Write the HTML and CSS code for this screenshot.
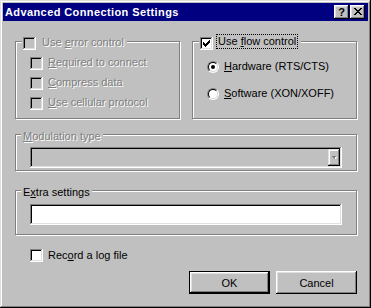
FILE: index.html
```html
<!DOCTYPE html>
<html lang="en">
<head>
    <meta charset="UTF-8">
    <title>Advanced Connection Settings</title>
    <link rel="stylesheet" href="styles.css">
</head>
<body>
    <div class="window">
        <div class="titlebar">
            <span class="title">Advanced Connection Settings</span>
            <div class="title-buttons">
                <button class="tbtn help">?</button>
                <button class="tbtn close">
                    <svg width="8" height="7" viewBox="0 0 8 7" shape-rendering="crispEdges">
                        <path d="M0 0h2v1h-2z M6 0h2v1h-2z M1 1h2v1h-2z M5 1h2v1h-2z M2 2h4v1h-4z M3 3h2v1h-2z M2 4h4v1h-4z M1 5h2v1h-2z M5 5h2v1h-2z M0 6h2v1h-2z M6 6h2v1h-2z" fill="#000"/>
                    </svg>
                </button>
            </div>
        </div>

        <div class="content">
            <div class="row">
                <div class="group">
                    <div class="group-title">
                        <span class="box disabled"></span>
                        <span class="label disabled title-label">Use <u>e</u>rror control</span>
                    </div>
                    <div class="options">
                        <div class="check">
                            <span class="box disabled"></span>
                            <span class="label disabled"><u>R</u>equired to connect</span>
                        </div>
                        <div class="check">
                            <span class="box disabled"></span>
                            <span class="label disabled"><u>C</u>ompress data</span>
                        </div>
                        <div class="check">
                            <span class="box disabled"></span>
                            <span class="label disabled"><u>U</u>se cellular protocol</span>
                        </div>
                    </div>
                </div>

                <div class="group">
                    <div class="group-title flow-title">
                        <span class="box">
                            <svg width="7" height="7" viewBox="0 0 7 7" shape-rendering="crispEdges">
                                <path d="M6 0h1v1h-1z M5 1h2v1h-2z M0 2h1v1h-1z M4 2h3v1h-3z M0 3h2v1h-2z M3 3h3v1h-3z M0 4h5v1h-5z M1 5h3v1h-3z M2 6h1v1h-1z" fill="#000"/>
                            </svg>
                        </span>
                        <span class="label focus">Use <u>f</u>low control</span>
                    </div>
                    <div class="radios">
                        <div class="check">
                            <span class="radio checked"><span class="radio-inner"></span></span>
                            <span class="label"><u>H</u>ardware (RTS/CTS)</span>
                        </div>
                        <div class="check">
                            <span class="radio"><span class="radio-inner"></span></span>
                            <span class="label"><u>S</u>oftware (XON/XOFF)</span>
                        </div>
                    </div>
                </div>
            </div>

            <div class="group group-modulation">
                <div class="group-title">
                    <span class="label disabled"><u>M</u>odulation type</span>
                </div>
                <div class="combo">
                    <span class="combo-btn">
                        <svg width="5" height="4" viewBox="0 0 6 4" shape-rendering="crispEdges">
                            <path d="M1 1h5v1h-5z M2 2h3v1h-3z M3 3h1v1h-1z" fill="#fff"/>
                            <path d="M0 0h5v1h-5z M1 1h3v1h-3z M2 2h1v1h-1z" fill="#808080"/>
                        </svg>
                    </span>
                </div>
            </div>

            <div class="group group-extra">
                <div class="group-title">
                    <span class="label">E<u>x</u>tra settings</span>
                </div>
                <div class="textbox"></div>
            </div>

            <div class="check log-row">
                <span class="box"></span>
                <span class="label">Rec<u>o</u>rd a log file</span>
            </div>

            <div class="actions">
                <button class="btn default">OK</button>
                <button class="btn">Cancel</button>
            </div>
        </div>
    </div>
</body>
</html>
```

FILE: styles.css
```css
* {
    margin: 0;
    padding: 0;
    box-sizing: border-box;
}

body {
    background-color: #c0c0c0;
    font-family: "Liberation Sans", Arial, sans-serif;
    font-size: 11px;
    line-height: 13px;
    color: #000;
}

u {
    text-decoration: underline;
    text-underline-offset: 1px;
}

.window {
    width: 371px;
    height: 308px;
    padding: 3px;
    background-color: #c0c0c0;
    box-shadow: inset -1px -1px #000, inset 1px 1px #dfdfdf, inset -2px -2px #808080, inset 2px 2px #fff;
}

.titlebar {
    height: 18px;
    background-color: #000080;
    color: #fff;
    display: flex;
    align-items: center;
    justify-content: space-between;
    padding: 0 3px 0 2px;
}

.title {
    font-weight: bold;
    font-size: 11px;
    letter-spacing: 0.4px;
}

.title-buttons {
    display: flex;
    gap: 1px;
}

.tbtn {
    width: 15px;
    height: 14px;
    border: none;
    background-color: #c0c0c0;
    box-shadow: inset -1px -1px #000, inset 1px 1px #fff, inset -2px -2px #808080, inset 2px 2px #dfdfdf;
    display: flex;
    align-items: center;
    justify-content: center;
    font-family: "Liberation Sans", Arial, sans-serif;
    font-weight: bold;
    font-size: 11px;
    color: #000;
    padding-bottom: 1px;
}

.content {
    padding: 20px 11px 0 12px;
    display: flex;
    flex-direction: column;
}

.row {
    display: flex;
    gap: 12px;
}

/* etched group frame */
.group {
    border: 1px solid #808080;
    box-shadow: 1px 1px 0 #fff, inset 1px 1px 0 #fff;
    display: flex;
    flex-direction: column;
    align-items: flex-start;
}

.row .group {
    width: 165px;
    height: 78px;
}

.group-title {
    display: flex;
    align-items: center;
    gap: 6px;
    height: 13px;
    margin: -5px 0 0 6px;
    padding: 0 3px 0 1px;
    background-color: #c0c0c0;
}

.title-label {
    margin-top: -3px;
}

.flow-title {
    gap: 3px;
}

.focus {
    border: 1px dotted #000;
    padding: 0 1px;
    margin-top: -5px;
}

.label {
    white-space: nowrap;
}

.label.disabled {
    color: #808080;
    text-shadow: 1px 1px 0 #fff;
}

.options {
    display: flex;
    flex-direction: column;
    gap: 7px;
    margin: 7px 0 0 14px;
}

.options .label {
    margin-top: -2px;
}

.radios {
    display: flex;
    flex-direction: column;
    gap: 14px;
    margin: 10px 0 0 14px;
}

.check {
    display: flex;
    align-items: center;
    gap: 5px;
    height: 13px;
}

.box {
    width: 13px;
    height: 13px;
    flex: none;
    background-color: #fff;
    box-shadow: inset -1px -1px #fff, inset 1px 1px #808080, inset -2px -2px #dfdfdf, inset 2px 2px #000;
    display: flex;
    align-items: center;
    justify-content: center;
}

.box.disabled {
    background-color: #c0c0c0;
}

.radio {
    width: 12px;
    height: 12px;
    flex: none;
    border-radius: 50%;
    border: 1px solid;
    border-color: #808080 #fff #fff #808080;
}

.radio-inner {
    display: flex;
    align-items: center;
    justify-content: center;
    width: 10px;
    height: 10px;
    border-radius: 50%;
    border: 1px solid;
    border-color: #000 #dfdfdf #dfdfdf #000;
    background-color: #fff;
}

.radio.checked .radio-inner::after {
    content: "";
    width: 4px;
    height: 4px;
    border-radius: 50%;
    background-color: #000;
}

.group-modulation {
    margin-top: 15px;
    height: 37px;
    padding: 0 14px 0 14px;
}

.group-modulation .group-title,
.group-extra .group-title {
    margin-left: -9px;
    padding: 0 2px 0 2px;
}

.combo {
    width: 312px;
    height: 21px;
    margin-top: 4px;
    padding: 2px;
    display: flex;
    justify-content: flex-end;
    background-color: #c0c0c0;
    box-shadow: inset -1px -1px #fff, inset 1px 1px #808080, inset -2px -2px #dfdfdf, inset 2px 2px #000;
}

.combo-btn {
    width: 12px;
    height: 17px;
    background-color: #c0c0c0;
    box-shadow: inset -1px -1px #000, inset 1px 1px #dfdfdf, inset -2px -2px #808080, inset 2px 2px #fff;
    display: flex;
    align-items: center;
    justify-content: center;
}

.group-extra {
    margin-top: 19px;
    height: 45px;
    padding: 0 14px;
}

.textbox {
    width: 312px;
    height: 21px;
    margin-top: 5px;
    background-color: #fff;
    box-shadow: inset -1px -1px #fff, inset 1px 1px #808080, inset -2px -2px #dfdfdf, inset 2px 2px #000;
}

.log-row {
    margin: 14px 0 0 15px;
}

.actions {
    display: flex;
    justify-content: flex-end;
    gap: 6px;
    margin-top: 9px;
}

.btn {
    width: 81px;
    height: 23px;
    border: none;
    background-color: #c0c0c0;
    font-family: "Liberation Sans", Arial, sans-serif;
    font-size: 11px;
    color: #000;
    box-shadow: inset -1px -1px #000, inset 1px 1px #fff, inset -2px -2px #808080, inset 2px 2px #dfdfdf;
}

.btn.default {
    border: 1px solid #000;
}
```
